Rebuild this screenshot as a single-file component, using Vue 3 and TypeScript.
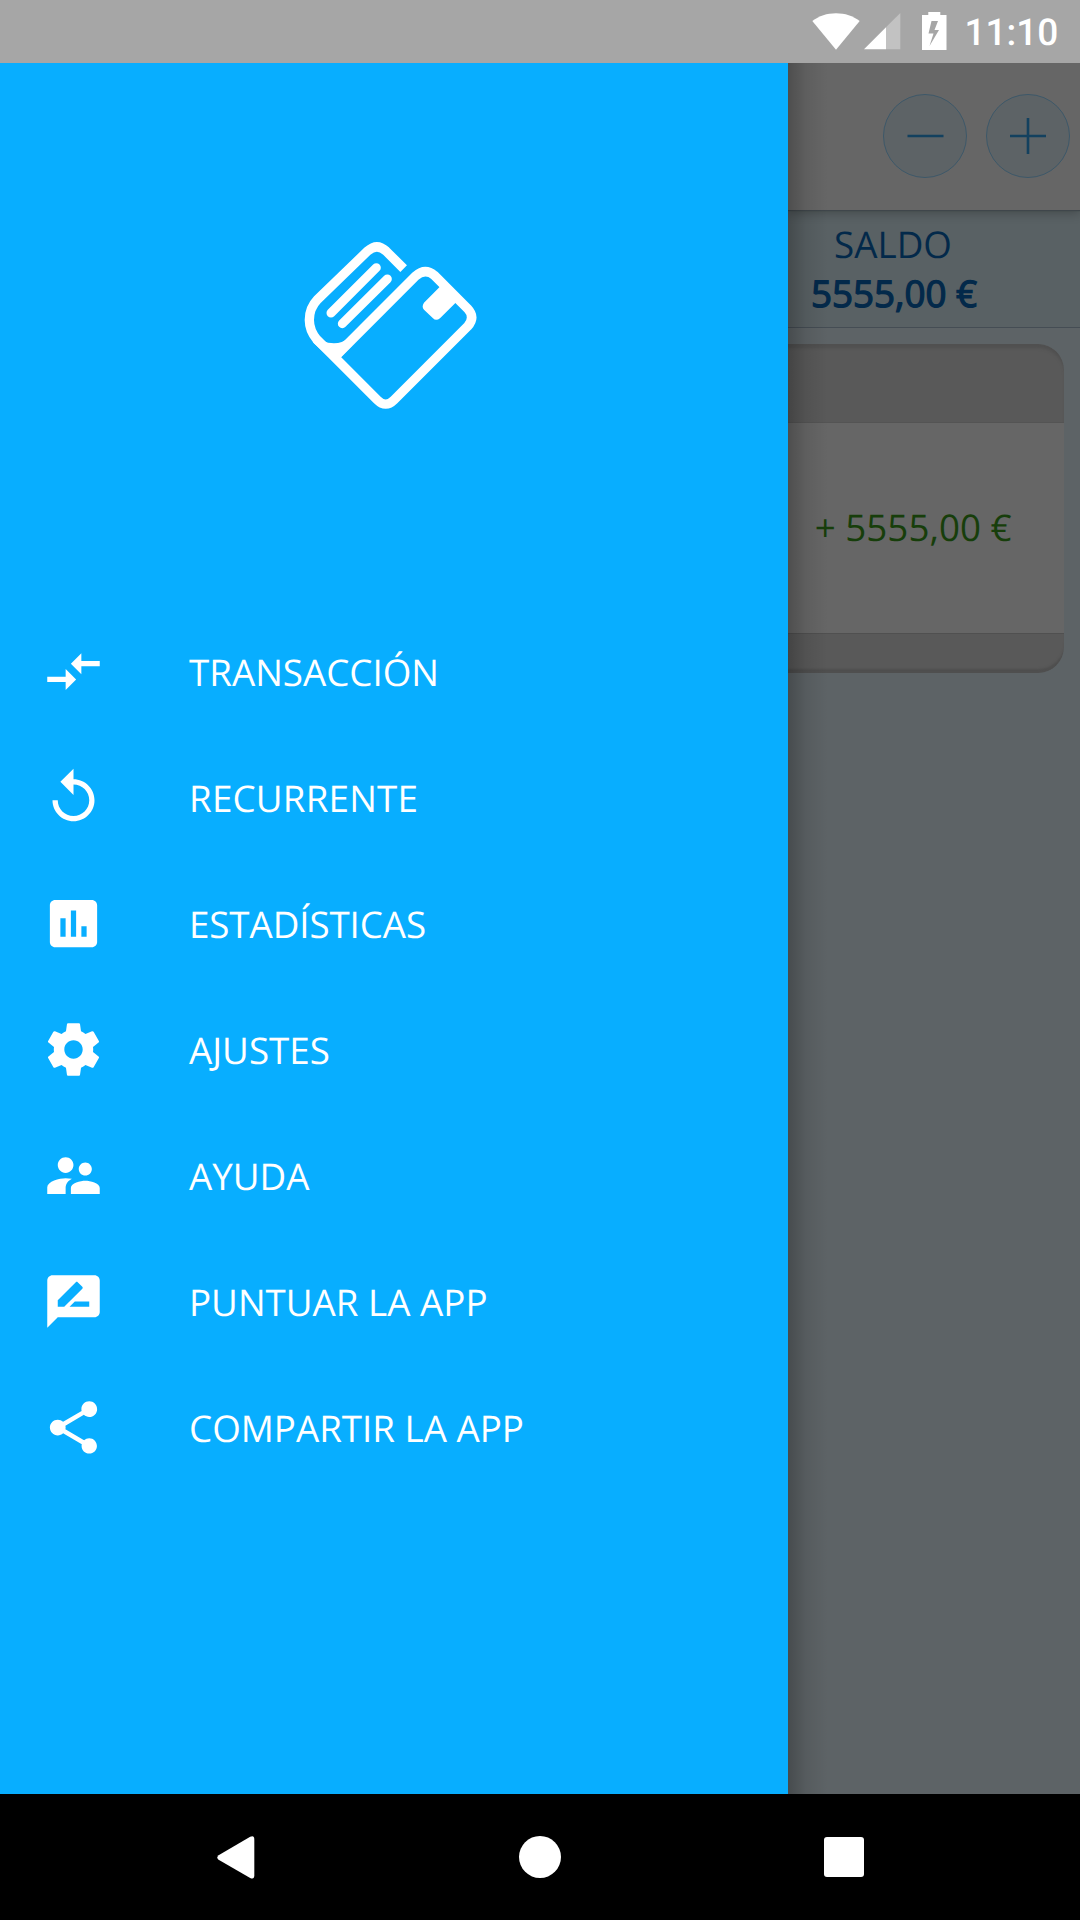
<script setup lang="ts">
interface MenuItem {
  label: string
  icon: string
}

const items: MenuItem[] = [
  {
    label: 'TRANSACCIÓN',
    icon: 'M9.01 14H2v2h7.01v3L13 15l-3.99-4v3zm5.98-1v-3H22V8h-7.01V5L11 9l3.99 4z',
  },
  {
    label: 'RECURRENTE',
    icon: 'M12 5V1L7 6l5 5V7c3.31 0 6 2.69 6 6s-2.69 6-6 6-6-2.69-6-6H4c0 4.42 3.58 8 8 8s8-3.58 8-8-3.58-8-8-8z',
  },
  {
    label: 'ESTADÍSTICAS',
    icon: 'M19 3H5c-1.1 0-2 .9-2 2v14c0 1.1.9 2 2 2h14c1.1 0 2-.9 2-2V5c0-1.1-.9-2-2-2zM9 17H7v-7h2v7zm4 0h-2V7h2v10zm4 0h-2v-4h2v4z',
  },
  {
    label: 'AJUSTES',
    icon: 'M19.43 12.98c.04-.32.07-.64.07-.98s-.03-.66-.07-.98l2.11-1.65c.19-.15.24-.42.12-.64l-2-3.46c-.12-.22-.39-.3-.61-.22l-2.49 1c-.52-.4-1.08-.73-1.69-.98l-.38-2.65C14.46 2.18 14.25 2 14 2h-4c-.25 0-.46.18-.49.42l-.38 2.65c-.61.25-1.17.59-1.69.98l-2.49-1c-.23-.09-.49 0-.61.22l-2 3.46c-.13.22-.07.49.12.64l2.11 1.65c-.04.32-.07.65-.07.98s.03.66.07.98l-2.11 1.65c-.19.15-.24.42-.12.64l2 3.46c.12.22.39.3.61.22l2.49-1c.52.4 1.08.73 1.69.98l.38 2.65c.03.24.24.42.49.42h4c.25 0 .46-.18.49-.42l.38-2.65c.61-.25 1.17-.59 1.69-.98l2.49 1c.23.09.49 0 .61-.22l2-3.46c.12-.22.07-.49-.12-.64l-2.11-1.65zM12 15.5c-1.93 0-3.5-1.57-3.5-3.5s1.57-3.5 3.5-3.5 3.5 1.57 3.5 3.5-1.57 3.5-3.5 3.5z',
  },
  {
    label: 'AYUDA',
    icon: 'M16.5 12c1.38 0 2.49-1.12 2.49-2.5S17.88 7 16.5 7C15.12 7 14 8.12 14 9.5s1.12 2.5 2.5 2.5zM9 11c1.66 0 2.99-1.34 2.99-3S10.66 5 9 5C7.34 5 6 6.34 6 8s1.34 3 3 3zm7.5 3c-1.83 0-5.5.92-5.5 2.75V19h11v-2.25c0-1.83-3.67-2.75-5.5-2.75zM9 13c-2.33 0-7 1.17-7 3.5V19h7v-2.25c0-.85.33-2.34 2.37-3.47C10.5 13.1 9.66 13 9 13z',
  },
  {
    label: 'PUNTUAR LA APP',
    icon: 'M20 2H4c-1.1 0-1.99.9-1.99 2L2 22l4-4h14c1.1 0 2-.9 2-2V4c0-1.1-.9-2-2-2zM6 14v-2.47l6.88-6.88c.2-.2.51-.2.71 0l1.77 1.77c.2.2.2.51 0 .71L8.47 14H6zm12 0h-7.5l2-2H18v2z',
  },
  {
    label: 'COMPARTIR LA APP',
    icon: 'M18 16.08c-.76 0-1.44.3-1.96.77L8.91 12.7c.05-.23.09-.46.09-.7s-.04-.47-.09-.7l7.05-4.11c.54.5 1.25.81 2.04.81 1.66 0 3-1.34 3-3s-1.34-3-3-3-3 1.34-3 3c0 .24.04.47.09.7L8.04 9.81C7.5 9.31 6.79 9 6 9c-1.66 0-3 1.34-3 3s1.34 3 3 3c.79 0 1.5-.31 2.04-.81l7.12 4.16c-.05.21-.08.43-.08.65 0 1.61 1.31 2.92 2.92 2.92 1.61 0 2.92-1.31 2.92-2.92s-1.31-2.92-2.92-2.92z',
  },
]
</script>

<template>
  <div class="screen">
    <header class="status">
      <svg class="wifi" width="48" height="37" viewBox="0 0 48 37">
        <path d="M24 36.8 0.3 8C7 3 15 .3 24 .3S41 3 47.7 8z" fill="#fff" />
      </svg>
      <svg class="signal" width="37" height="37" viewBox="0 0 37 37">
        <path d="M36.3 0v36.3H22V14.3z" fill="#c2c2c2" />
        <path d="M22 14.3v22H0z" fill="#fff" />
      </svg>
      <svg class="battery" width="25" height="38" viewBox="0 0 25 38">
        <path
          fill="#fff"
          fill-rule="evenodd"
          d="M6.3 0h12v3h6.2v35H0V3h6.3zM9.5 9 6.5 21.5h5L7.5 34 17 18h-4.5L16 9z"
        />
      </svg>
      <span class="clock">11:10</span>
    </header>

    <div class="middle">
      <nav class="drawer">
        <svg class="logo" width="220" height="210" viewBox="0 0 660 630">
          <g fill="none" stroke="#fff" stroke-width="28">
            <path
              d="M371 146 318 93Q291 68 263 93L113 238Q88 264 88 300Q88 332 111 359L292 540Q317 565 342 540L563 319Q587 292 563 266L463 166Q435 143 407 168L172 403"
            />
            <path d="M153 279 289 143M187 311 322 177" stroke-width="27" stroke-linecap="round" />
          </g>
          <path
            fill="#fff"
            d="M103 340Q125 370 162 370Q187 370 205 354L215 378 183 411 160 424 100 368z"
          />
          <path
            fill="#fff"
            d="M490 190 432 248Q424 260 432 269L459 295Q468 304 480 295L536 239z"
          />
        </svg>
        <ul class="menu">
          <li v-for="item in items" :key="item.label" class="item">
            <svg width="63" height="63" viewBox="0 0 24 24" fill="#fff">
              <path :d="item.icon" />
            </svg>
            <span>{{ item.label }}</span>
          </li>
        </ul>
      </nav>

      <main class="page">
        <div class="toolbar">
          <button class="round" type="button" aria-label="Restar">
            <svg width="82" height="82" viewBox="0 0 82 82">
              <path d="M23.5 41h36" stroke="#13415f" stroke-width="2.6" />
            </svg>
          </button>
          <button class="round" type="button" aria-label="Sumar">
            <svg width="82" height="82" viewBox="0 0 82 82">
              <path d="M23 41h36M41 23v36" stroke="#13415f" stroke-width="2.6" />
            </svg>
          </button>
        </div>
        <section class="summary">
          <span class="title">SALDO</span>
          <strong>5555,00 €</strong>
        </section>
        <section class="card">
          <div class="card-head"></div>
          <div class="card-body">+ 5555,00 €</div>
          <div class="card-foot"></div>
        </section>
      </main>
    </div>

    <footer class="navbar">
      <svg width="38" height="43" viewBox="0 0 38 43">
        <path d="M33.2.8Q37.3-1 37.3 3.5v36q0 4.3-4.1 2.5L1.6 23.8q-2.6-2.3 0-4.6z" fill="#fff" />
      </svg>
      <span class="home"></span>
      <span class="recent"></span>
    </footer>
  </div>
</template>

<style>
body {
  margin: 0;
}
</style>

<style scoped>
.screen {
  width: 1080px;
  height: 1920px;
  display: flex;
  flex-direction: column;
  overflow: hidden;
  font-family: 'Open Sans', 'Noto Sans', sans-serif;
  font-size: 36.75px;
  text-rendering: geometricPrecision;
}

.status {
  box-sizing: border-box;
  height: 63px;
  flex: none;
  display: flex;
  align-items: flex-start;
  padding: 12px 21px 0 812px;
  background: #a6a6a6;
  color: #fff;
}

.status svg {
  flex: none;
}

.signal {
  margin: 1px 0 0 3.5px;
}

.wifi {
  margin-top: 1px;
}

.battery {
  margin-left: 21px;
}

.clock {
  margin-left: 18px;
  font: 500 37px/44px Roboto, sans-serif;
  white-space: nowrap;
}

.middle {
  height: 1731px;
  flex: none;
  display: flex;
}

.drawer {
  width: 788px;
  flex: none;
  background: #08aeff;
  color: #fff;
}

.logo {
  display: block;
  margin: 157px 0 0 280px;
}

.menu {
  list-style: none;
  margin: 179px 0 0;
  padding: 0;
}

.item {
  box-sizing: border-box;
  height: 126px;
  display: flex;
  align-items: center;
  gap: 84px;
  padding-left: 42px;
  white-space: nowrap;
}

.item svg {
  margin-bottom: 2px;
}

.item:nth-child(2) span {
  letter-spacing: 0.2px;
}

.item:nth-child(3) span {
  letter-spacing: -0.1px;
}

.page {
  position: relative;
  width: 292px;
  flex: none;
  overflow: hidden;
  background: #5d6366;
}

.page::after {
  content: '';
  position: absolute;
  inset: 0 auto 0 0;
  width: 40px;
  background: linear-gradient(to right, rgba(0, 0, 0, 0.24), rgba(0, 0, 0, 0.08) 45%, transparent);
}

.toolbar {
  box-sizing: border-box;
  position: relative;
  height: 147px;
  display: flex;
  justify-content: flex-end;
  align-items: center;
  gap: 19px;
  padding: 0 10px 2px 0;
  background: #666;
  box-shadow: 0 1px 1px #3f464b, 0 3px 10px rgba(0, 0, 0, 0.25);
}

.round {
  box-sizing: border-box;
  width: 84px;
  height: 84px;
  padding: 0;
  border: 1.5px solid #3d5869;
  border-radius: 50%;
  background: #5d6366;
}

.round svg {
  display: block;
}

.summary {
  box-sizing: border-box;
  height: 118px;
  display: flex;
  flex-direction: column;
  align-items: center;
  padding: 10px 80px 0 0;
  border-bottom: 1px solid #454d54;
  background: #596164;
  color: #03294a;
  line-height: 49px;
  white-space: nowrap;
}

.title {
  margin-right: 2px;
}

.summary strong {
  font-weight: 400;
  -webkit-text-stroke: 1.3px #03294a;
}

.card {
  width: 276px;
  height: 329px;
  margin-top: 16px;
  display: flex;
  flex-direction: column;
  overflow: hidden;
  border-radius: 0 26px 26px 0;
}

.card-head {
  height: 79px;
  box-sizing: border-box;
  border-radius: 0 26px 0 0;
  border-bottom: 1px solid #545454;
  background: #595959;
  box-shadow: inset 0 5px 3px -1px #505050;
}

.card-body {
  box-sizing: border-box;
  height: 210px;
  display: flex;
  align-items: center;
  justify-content: flex-end;
  padding: 0 52.5px 2px 0;
  background: #666;
  color: #173e0b;
  white-space: nowrap;
}

.card-foot {
  box-sizing: border-box;
  height: 40px;
  border-top: 1px solid #505050;
  border-radius: 0 0 26px 0;
  background: #595959;
  box-shadow: inset 0 -5px 2px -1px #4f4f4f;
}

.navbar {
  box-sizing: border-box;
  height: 126px;
  flex: none;
  display: flex;
  align-items: center;
  justify-content: space-between;
  padding: 0 216px 0 217px;
  background: #000;
}

.home {
  width: 42px;
  height: 42px;
  margin-left: 1px;
  border-radius: 50%;
  background: #fff;
}

.recent {
  width: 40px;
  height: 40px;
  border-radius: 3px;
  background: #fff;
}
</style>
